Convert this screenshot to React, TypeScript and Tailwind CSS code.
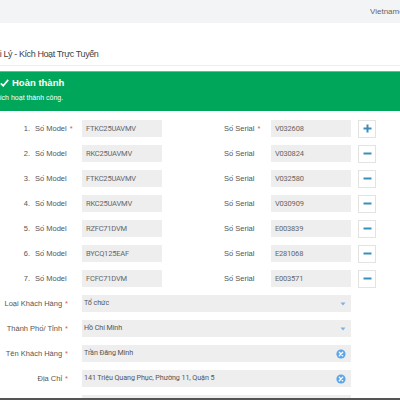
import React from 'react';

const models = [
  { model: 'FTKC25UAVMV', serial: 'V032608' },
  { model: 'RKC25UAVMV', serial: 'V030824' },
  { model: 'FTKC25UAVMV', serial: 'V032580' },
  { model: 'RKC25UAVMV', serial: 'V030909' },
  { model: 'RZFC71DVM', serial: 'E003839' },
  { model: 'BYCQ125EAF', serial: 'E281068' },
  { model: 'FCFC71DVM', serial: 'E003571' },
];

const Req = () => <span className="text-[#e05b5b] ml-[3px]">*</span>;

const Caret = () => (
  <svg width="6" height="4" viewBox="0 0 6 4" className="shrink-0">
    <path d="M0.5 0.5 L5.5 0.5 L3 3.5 Z" fill="#7fb2e0" />
  </svg>
);

const ClearIcon = () => (
  <svg width="10" height="10" viewBox="0 0 10 10" className="shrink-0">
    <circle cx="5" cy="5" r="4.6" fill="#5ca6e6" />
    <path d="M3.3 3.3 L6.7 6.7 M6.7 3.3 L3.3 6.7" stroke="#fff" strokeWidth="1.3" strokeLinecap="round" />
  </svg>
);

const ModelRow: React.FC<{ i: number; model: string; serial: string }> = ({ i, model, serial }) => (
  <div className="flex items-center h-[17px] whitespace-nowrap">
    <div className="w-[82px] flex items-center text-[7.5px] text-[#555]">
      <span className="w-[30px] text-right">{i + 1}.</span>
      <span className="ml-[5px]">Số Model</span>
      {i === 0 && <Req />}
    </div>
    <div className="w-[80px] h-[17px] bg-[#eeeeee] flex items-center pl-[4px] text-[7.5px] tracking-[-0.2px] text-[#666] font-['Roboto',sans-serif]">
      {model}
    </div>
    <div className="ml-[62px] w-[47px] flex items-center text-[7.5px] text-[#555]">
      <span>Số Serial</span>
      {i === 0 && <Req />}
    </div>
    <div className="w-[80px] h-[17px] bg-[#eeeeee] flex items-center pl-[4px] text-[7.5px] tracking-[-0.2px] text-[#666] font-['Roboto',sans-serif]">
      {serial}
    </div>
    <div className="ml-[7px] w-[18px] h-[18px] bg-white border border-[#e3e3e3] flex items-center justify-center">
      {i === 0 ? (
        <svg width="9" height="9" viewBox="0 0 9 9">
          <path d="M4.5 0.5 V8.5 M0.5 4.5 H8.5" stroke="#3c8dbc" strokeWidth="2" />
        </svg>
      ) : (
        <svg width="9" height="9" viewBox="0 0 9 9">
          <path d="M0.5 4.5 H8.5" stroke="#3c8dbc" strokeWidth="2" />
        </svg>
      )}
    </div>
  </div>
);

const FieldRow: React.FC<{ label: string; value: string; kind: 'select' | 'clear' }> = ({ label, value, kind }) => (
  <div className="flex items-center h-[17px] whitespace-nowrap">
    <div className="w-[82px] pr-[14px] flex items-center justify-end text-[7.5px] text-[#555]">
      <span>{label}</span>
      <Req />
    </div>
    <div className="w-[269px] h-[17px] bg-[#eeeeee] flex items-center justify-between pl-[2px] pr-[5px] text-[7.2px] tracking-[-0.1px] text-[#555] font-['Roboto',sans-serif]">
      <span>{value}</span>
      {kind === 'select' ? <Caret /> : <ClearIcon />}
    </div>
  </div>
);

export default function App() {
  return (
    <div className="relative w-[400px] h-[400px] overflow-hidden bg-white font-['Liberation_Sans',Arial,sans-serif]">
      <div className="h-[23px] bg-[#f3f4f6] flex items-center pl-[370px] whitespace-nowrap">
        <span className="text-[8px] text-[#666]">Vietnamese</span>
      </div>

      <div className="h-[43px] border-b border-[#eeeeee] flex items-end pb-[4px] whitespace-nowrap">
        <span className="ml-[-11px] text-[9px] tracking-[-0.4px] text-[#444]">Đại Lý - Kích Hoạt Trực Tuyến</span>
      </div>

      <div className="mt-[5px] h-[40px] bg-[#00a65a] border-t border-[#55c690] text-white whitespace-nowrap">
        <div className="flex items-center pt-[4px] h-[18px]">
          <svg width="9" height="8" viewBox="0 0 9 8">
            <path d="M0.8 4.4 L3.2 6.8 L8.2 0.9" stroke="#fff" strokeWidth="1.7" fill="none" />
          </svg>
          <span className="ml-[3px] text-[9.5px] font-bold">Hoàn thành</span>
        </div>
        <div className="mt-[3px] ml-[-5px] text-[7px]">Kích hoạt thành công.</div>
      </div>

      <div className="mt-[9px] flex flex-col gap-[8px]">
        {models.map((m, i) => (
          <ModelRow key={i} i={i} model={m.model} serial={m.serial} />
        ))}
        <FieldRow label="Loại Khách Hàng" value="Tổ chức" kind="select" />
        <FieldRow label="Thành Phố/ Tỉnh" value="Hồ Chí Minh" kind="select" />
        <FieldRow label="Tên Khách Hàng" value="Trần Đăng Minh" kind="clear" />
        <FieldRow label="Địa Chỉ" value="141 Triệu Quang Phục, Phường 11, Quận 5" kind="clear" />
        <FieldRow label="Quận/ Huyện" value="Quận 5" kind="select" />
      </div>

      <div className="absolute left-0 bottom-0 w-full h-[2px] bg-[#555]" />
    </div>
  );
}
